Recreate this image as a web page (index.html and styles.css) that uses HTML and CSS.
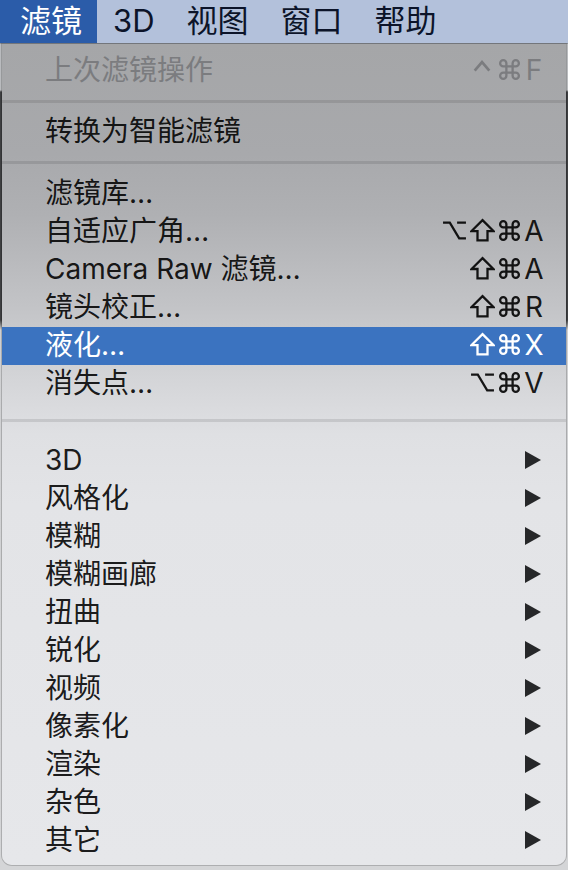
FILE: index.html
```html
<!DOCTYPE html>
<html lang="zh-CN">
<head>
<meta charset="utf-8">
<title>滤镜菜单</title>
<link rel="stylesheet" href="styles.css">
</head>
<body>
<div class="screen">
  <nav class="menubar">
    <span class="bar-item active">滤镜</span>
    <span class="bar-item">3D</span>
    <span class="bar-item">视图</span>
    <span class="bar-item">窗口</span>
    <span class="bar-item">帮助</span>
  </nav>
  <div class="menu">
    <div class="row disabled">
      <span class="label">上次滤镜操作</span>
      <span class="keys">
        <span class="mod"><svg class="ic ic-ctrl" viewBox="0 0 16 11"><path d="M1.5 10 L8 2.5 L14.5 10"/></svg></span>
        <span class="cmd"><svg class="ic" viewBox="0 0 24 24"><path d="M15 6v12a3 3 0 1 0 3-3H6a3 3 0 1 0 3 3V6a3 3 0 1 0-3 3h12a3 3 0 1 0-3-3"/></svg></span>
        <span class="key">F</span>
      </span>
    </div>
    <div class="sep"></div>
    <div class="row">
      <span class="label">转换为智能滤镜</span>
    </div>
    <div class="sep sep-mid"></div>
    <div class="row"><span class="label">滤镜库…</span></div>
    <div class="row">
      <span class="label">自适应广角…</span>
      <span class="keys">
        <span class="mod"><svg class="ic" viewBox="0 0 24 24"><path d="M1 4.5h6.5l9 15H23M14.5 4.5H23"/></svg></span>
        <span class="mod"><svg class="ic" viewBox="0 0 24 24"><path d="M12 2 L22.5 12.5 H16.8 V21.5 H7.2 V12.5 H1.5 Z"/></svg></span>
        <span class="cmd"><svg class="ic" viewBox="0 0 24 24"><path d="M15 6v12a3 3 0 1 0 3-3H6a3 3 0 1 0 3 3V6a3 3 0 1 0-3 3h12a3 3 0 1 0-3-3"/></svg></span>
        <span class="key">A</span>
      </span>
    </div>
    <div class="row">
      <span class="label">Camera Raw 滤镜…</span>
      <span class="keys">
        <span class="mod"><svg class="ic" viewBox="0 0 24 24"><path d="M12 2 L22.5 12.5 H16.8 V21.5 H7.2 V12.5 H1.5 Z"/></svg></span>
        <span class="cmd"><svg class="ic" viewBox="0 0 24 24"><path d="M15 6v12a3 3 0 1 0 3-3H6a3 3 0 1 0 3 3V6a3 3 0 1 0-3 3h12a3 3 0 1 0-3-3"/></svg></span>
        <span class="key">A</span>
      </span>
    </div>
    <div class="row">
      <span class="label">镜头校正…</span>
      <span class="keys">
        <span class="mod"><svg class="ic" viewBox="0 0 24 24"><path d="M12 2 L22.5 12.5 H16.8 V21.5 H7.2 V12.5 H1.5 Z"/></svg></span>
        <span class="cmd"><svg class="ic" viewBox="0 0 24 24"><path d="M15 6v12a3 3 0 1 0 3-3H6a3 3 0 1 0 3 3V6a3 3 0 1 0-3 3h12a3 3 0 1 0-3-3"/></svg></span>
        <span class="key">R</span>
      </span>
    </div>
    <div class="row selected">
      <span class="label">液化…</span>
      <span class="keys">
        <span class="mod"><svg class="ic" viewBox="0 0 24 24"><path d="M12 2 L22.5 12.5 H16.8 V21.5 H7.2 V12.5 H1.5 Z"/></svg></span>
        <span class="cmd"><svg class="ic" viewBox="0 0 24 24"><path d="M15 6v12a3 3 0 1 0 3-3H6a3 3 0 1 0 3 3V6a3 3 0 1 0-3 3h12a3 3 0 1 0-3-3"/></svg></span>
        <span class="key">X</span>
      </span>
    </div>
    <div class="row">
      <span class="label">消失点…</span>
      <span class="keys">
        <span class="mod"><svg class="ic" viewBox="0 0 24 24"><path d="M1 4.5h6.5l9 15H23M14.5 4.5H23"/></svg></span>
        <span class="cmd"><svg class="ic" viewBox="0 0 24 24"><path d="M15 6v12a3 3 0 1 0 3-3H6a3 3 0 1 0 3 3V6a3 3 0 1 0-3 3h12a3 3 0 1 0-3-3"/></svg></span>
        <span class="key">V</span>
      </span>
    </div>
    <div class="sep sep-wide"></div>
    <div class="row"><span class="label">3D</span><svg class="arrow" viewBox="0 0 16 18"><polygon points="0,0 16,9 0,18"/></svg></div>
    <div class="row"><span class="label">风格化</span><svg class="arrow" viewBox="0 0 16 18"><polygon points="0,0 16,9 0,18"/></svg></div>
    <div class="row"><span class="label">模糊</span><svg class="arrow" viewBox="0 0 16 18"><polygon points="0,0 16,9 0,18"/></svg></div>
    <div class="row"><span class="label">模糊画廊</span><svg class="arrow" viewBox="0 0 16 18"><polygon points="0,0 16,9 0,18"/></svg></div>
    <div class="row"><span class="label">扭曲</span><svg class="arrow" viewBox="0 0 16 18"><polygon points="0,0 16,9 0,18"/></svg></div>
    <div class="row"><span class="label">锐化</span><svg class="arrow" viewBox="0 0 16 18"><polygon points="0,0 16,9 0,18"/></svg></div>
    <div class="row"><span class="label">视频</span><svg class="arrow" viewBox="0 0 16 18"><polygon points="0,0 16,9 0,18"/></svg></div>
    <div class="row"><span class="label">像素化</span><svg class="arrow" viewBox="0 0 16 18"><polygon points="0,0 16,9 0,18"/></svg></div>
    <div class="row"><span class="label">渲染</span><svg class="arrow" viewBox="0 0 16 18"><polygon points="0,0 16,9 0,18"/></svg></div>
    <div class="row"><span class="label">杂色</span><svg class="arrow" viewBox="0 0 16 18"><polygon points="0,0 16,9 0,18"/></svg></div>
    <div class="row"><span class="label">其它</span><svg class="arrow" viewBox="0 0 16 18"><polygon points="0,0 16,9 0,18"/></svg></div>
  </div>
</div>
</body>
</html>
```
FILE: styles.css
```css
html, body {
  margin: 0;
  padding: 0;
}
body {
  width: 568px;
  height: 870px;
  overflow: hidden;
  background: linear-gradient(to bottom, #b9bbbe 0, #b9bbbe 90px, #3e3f41 92px, #3e3f41 320px, #cfd0d2 330px, #d4d5d7 100%);
  font-family: Inter, "Noto Sans CJK SC", sans-serif;
}
.screen {
  display: flex;
  flex-direction: column;
}
.menubar {
  display: flex;
  height: 43px;
  background: #b3c1db;
  border-bottom: 1px solid #8d9096;
  padding-left: 3px;
  font-size: 31px;
  color: #0c1429;
}
.bar-item {
  display: flex;
  align-items: center;
  padding: 0 16px 2px;
  line-height: 1;
}
.bar-item.active {
  background: #2b5ca9;
  color: #ffffff;
  margin-left: -3px;
  padding-left: 20px;
  padding-right: 15px;
}
.menu {
  margin: 0 2px;
  padding: 8px 0 5px;
  border-radius: 0 0 10px 10px;
  box-shadow: 0 0 0 1px rgba(0, 0, 0, 0.18);
  background: linear-gradient(to bottom, #a5a6a8 0, #a8a9ac 110px, #afb0b3 170px, #c2c3c6 260px, #d5d6d9 340px, #dfe0e3 390px, #e3e4e7 460px, #e6e7ea 100%);
  font-size: 28px;
  color: rgba(0, 0, 0, 0.9);
}
.row {
  display: flex;
  align-items: center;
  height: 38px;
  box-sizing: border-box;
  padding: 0 20px 3px 43px;
  line-height: 1;
  white-space: nowrap;
}
.row.disabled {
  color: #7b7c7f;
}
.row.selected {
  background: #3b73c0;
  color: #ffffff;
}
.label {
  flex: 1;
}
.keys {
  display: flex;
  align-items: center;
}
.mod {
  display: flex;
  justify-content: center;
  width: 28px;
}
.cmd {
  display: flex;
  justify-content: center;
  width: 26px;
}
.ic {
  width: 25px;
  height: 25px;
  fill: none;
  stroke: currentColor;
  stroke-width: 2.2;
  stroke-linejoin: miter;
}
.ic-ctrl {
  width: 18px;
  height: 13px;
  margin-bottom: 9px;
  stroke-width: 2.4;
}
.key {
  width: 24px;
  text-align: center;
  font-family: Inter, sans-serif;
  font-size: 28px;
}
.arrow {
  width: 16px;
  height: 18px;
  margin-right: 5px;
  fill: #262729;
}
.sep {
  height: 3px;
  margin: 10px 0;
  background: rgba(0, 0, 0, 0.1);
}
.sep.sep-mid {
  margin: 10px 0 11px;
}
.sep.sep-wide {
  margin: 16px 0 20px;
}
```
